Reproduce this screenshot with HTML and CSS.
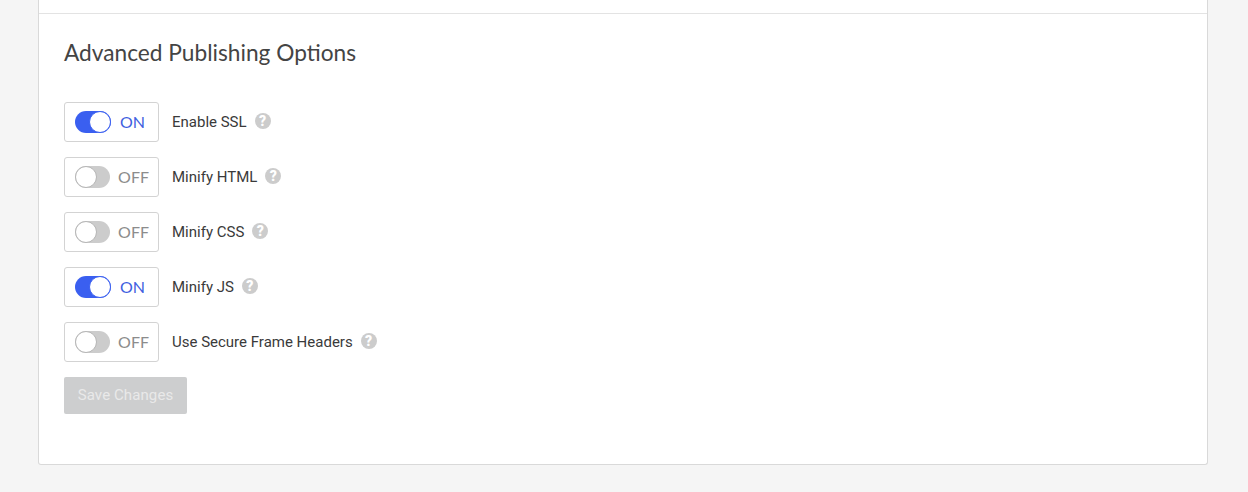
FILE: index.html
```html
<!DOCTYPE html>
<html lang="en">
<head>
    <meta charset="UTF-8">
    <title>Advanced Publishing Options</title>
    <link rel="stylesheet" href="styles.css">
</head>
<body>
    <div class="panel">
        <div class="panel-top"></div>
        <section class="panel-body">
            <h2>Advanced Publishing Options</h2>

            <div class="option">
                <div class="toggle-box is-on"><span class="switch"><span class="knob"></span></span><span class="state">ON</span></div>
                <span class="label">Enable SSL</span>
                <span class="help">?</span>
            </div>
            <div class="option">
                <div class="toggle-box"><span class="switch"><span class="knob"></span></span><span class="state">OFF</span></div>
                <span class="label">Minify HTML</span>
                <span class="help">?</span>
            </div>
            <div class="option">
                <div class="toggle-box"><span class="switch"><span class="knob"></span></span><span class="state">OFF</span></div>
                <span class="label">Minify CSS</span>
                <span class="help">?</span>
            </div>
            <div class="option">
                <div class="toggle-box is-on"><span class="switch"><span class="knob"></span></span><span class="state">ON</span></div>
                <span class="label">Minify JS</span>
                <span class="help">?</span>
            </div>
            <div class="option">
                <div class="toggle-box"><span class="switch"><span class="knob"></span></span><span class="state">OFF</span></div>
                <span class="label">Use Secure Frame Headers</span>
                <span class="help">?</span>
            </div>

            <button type="button" class="save-btn" disabled>Save Changes</button>
        </section>
    </div>
</body>
</html>
```

FILE: styles.css
```css
html, body {
    height: 100%;
}
body {
    margin: 0;
    background-color: #f5f5f5;
    font-family: "Roboto", "Liberation Sans", sans-serif;
    color: #333;
    overflow: hidden;
}
.panel {
    width: 1168px;
    height: 464px;
    margin-left: 38px;
    background-color: #fff;
    border: 1px solid #d9d9d9;
    border-top: none;
    border-radius: 0 0 3px 3px;
}
.panel-top {
    height: 13px;
    border-bottom: 1px solid #e3e3e3;
}
.panel-body {
    padding: 24px 25px 0;
}
h2 {
    margin: 0 0 34px;
    font-family: "Lato", "Liberation Sans", sans-serif;
    font-size: 22.7px;
    font-weight: 400;
    line-height: 30px;
    color: #444;
}
.option {
    display: flex;
    align-items: center;
    height: 40px;
    margin-bottom: 15px;
}
.toggle-box {
    display: flex;
    align-items: center;
    justify-content: space-between;
    box-sizing: border-box;
    width: 95px;
    height: 40px;
    padding: 0 9px 0 10px;
    border: 1px solid #d3d3d3;
    border-radius: 3px;
}
.switch {
    display: flex;
    justify-content: flex-start;
    box-sizing: border-box;
    width: 35px;
    height: 22px;
    border-radius: 11px;
    background-color: #ccc;
}
.knob {
    box-sizing: border-box;
    width: 22px;
    height: 22px;
    border: 1px solid #b5b5b5;
    border-radius: 50%;
    background-color: #fff;
}
.state {
    margin-top: -1px;
    font-family: "Lato", "Liberation Sans", sans-serif;
    font-size: 16px;
    color: #8c8c8c;
}
.is-on .switch {
    justify-content: flex-end;
    width: 36px;
    background-color: #3a5ff0;
}
.is-on .knob {
    border-color: #3a5ff0;
}
.is-on .state {
    margin-right: 4px;
    color: #3f5fe0;
}
.label {
    margin-left: 13px;
    margin-top: -1px;
    font-size: 15px;
    color: #3a3a3a;
}
.help {
    display: flex;
    align-items: center;
    justify-content: center;
    width: 16px;
    height: 16px;
    margin: -2px 0 0 8px;
    border-radius: 50%;
    background-color: #ccc;
    color: #fff;
    font-size: 14px;
    font-weight: 900;
}
.save-btn {
    display: block;
    width: 123px;
    height: 37px;
    padding: 0 0 2px;
    border: none;
    border-radius: 2px;
    background-color: #cdcecf;
    color: #e9e9e9;
    font-family: inherit;
    font-size: 15px;
    letter-spacing: 0.1px;
}
```
